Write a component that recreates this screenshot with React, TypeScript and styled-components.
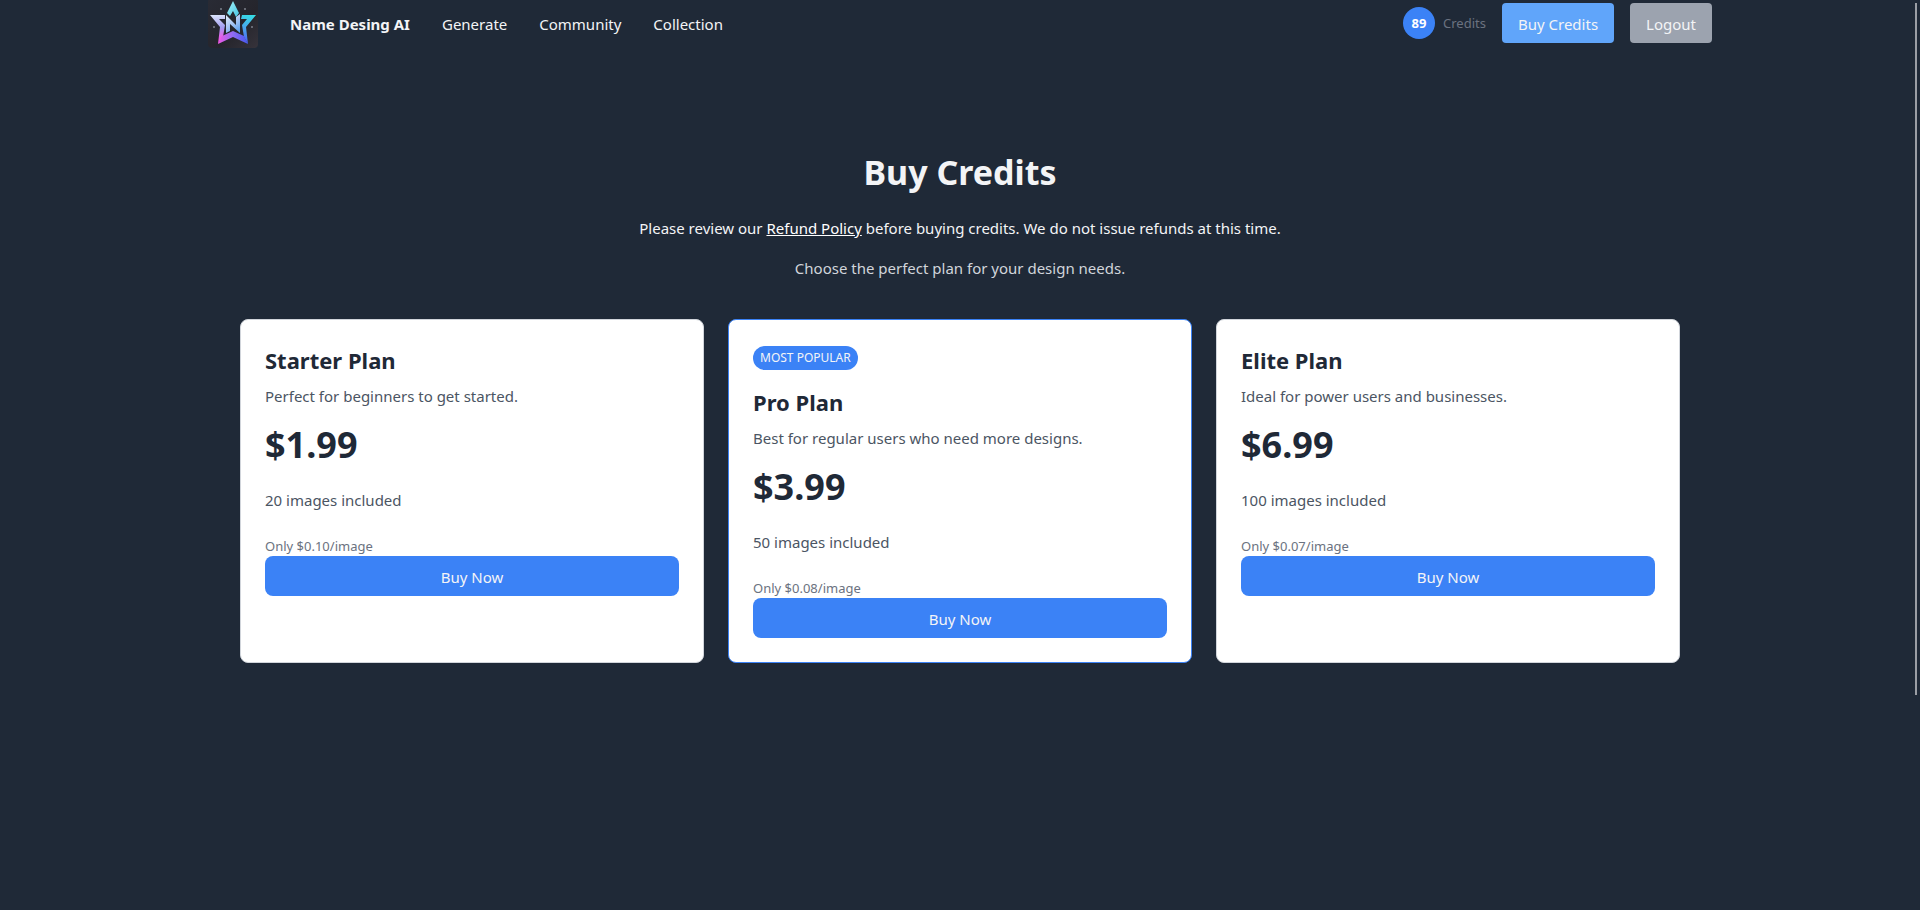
import React from "react";
import styled, { createGlobalStyle } from "styled-components";

const GlobalStyle = createGlobalStyle`
  *, *::before, *::after { box-sizing: border-box; }
  body {
    margin: 0;
    background: #1f2937;
    color: #f3f4f6;
    font-family: "Noto Sans", "Open Sans", sans-serif;
    font-size: 15px;
    line-height: 24px;
  }
  h1, h2, p { margin: 0; }
  button { font: inherit; border: 0; cursor: pointer; }
`;

const Page = styled.div`
  position: relative;
  min-height: 100vh;
`;

const ScrollThumb = styled.div`
  position: absolute;
  top: 3px;
  right: 3px;
  width: 2px;
  height: 76vh;
  background: #9b9ea5;
`;

const Header = styled.header`
  display: flex;
  align-items: center;
  justify-content: space-between;
  max-width: 1536px;
  height: 46px;
  margin: 0 auto;
  padding: 0 16px;
`;

const Nav = styled.nav`
  display: flex;
  align-items: center;
  gap: 32px;
`;

const Logo = styled.svg`
  display: block;
  flex: none;
  width: 50px;
  height: 50px;
  border-radius: 4px;
`;

const NavLink = styled.a<{ $brand?: boolean }>`
  padding-top: 2px;
  color: #f3f4f6;
  font-weight: ${(p) => (p.$brand ? 700 : 400)};
  text-decoration: none;
`;

const Account = styled.div`
  display: flex;
  align-items: center;
  gap: 16px;
`;

const Credits = styled.div`
  display: flex;
  align-items: center;
  gap: 8px;
  color: #6b7280;
  font-size: 13px;
`;

const CreditCount = styled.span`
  display: grid;
  place-items: center;
  width: 32px;
  height: 32px;
  border-radius: 50%;
  background: #3b82f6;
  color: #ffffff;
  font-weight: 700;
`;

const HeaderButton = styled.button<{ $muted?: boolean }>`
  padding: 9px 16px 7px;
  border-radius: 4px;
  background: ${(p) => (p.$muted ? "#9ca3af" : "#60a5fa")};
  color: #f3f4f6;
`;

const Main = styled.main`
  max-width: 1472px;
  margin: 0 auto;
  padding: 106px 16px 48px;
`;

const Intro = styled.div`
  display: flex;
  flex-direction: column;
  align-items: center;
  gap: 16px;
  margin-bottom: 39px;
  text-align: center;
`;

const Title = styled.h1`
  margin-bottom: 8px;
  font-size: 34px;
  line-height: 40px;
  font-weight: 700;
`;

const Policy = styled.p`
  color: #f3f4f6;
`;

const PolicyLink = styled.a`
  color: #ffffff;
  text-decoration: underline;
`;

const Tagline = styled.p`
  color: #d1d5db;
`;

const Plans = styled.div`
  display: grid;
  grid-template-columns: repeat(3, minmax(0, 1fr));
  gap: 24px;
`;

const Card = styled.section<{ $popular?: boolean }>`
  padding: 24px;
  border: 1px solid ${(p) => (p.$popular ? "#3b82f6" : "#d1d5db")};
  border-radius: 8px;
  background: #ffffff;
  color: #4b5563;
`;

const Badge = styled.span`
  display: block;
  width: fit-content;
  margin: 2px 0 16px;
  padding: 4px 7px;
  border-radius: 12px;
  background: #3b82f6;
  color: #f3f4f6;
  font-size: 12px;
  line-height: 16px;
`;

const PlanName = styled.h2`
  margin-bottom: 8px;
  color: #1f2937;
  font-size: 22px;
  line-height: 32px;
  font-weight: 700;
`;

const Price = styled.p`
  margin: 17px 0 23px;
  color: #1f2937;
  font-size: 36px;
  line-height: 40px;
  font-weight: 700;
`;

const Rate = styled.p`
  margin-top: 24px;
  color: #6b7280;
  font-size: 13px;
  line-height: 20px;
`;

const BuyButton = styled.button`
  display: block;
  width: 100%;
  padding: 9px 16px 7px;
  border-radius: 8px;
  background: #3b82f6;
  color: #f3f4f6;
`;

const plans = [
  { name: "Starter Plan", text: "Perfect for beginners to get started.", price: "$1.99", images: 20, rate: "$0.10" },
  { name: "Pro Plan", text: "Best for regular users who need more designs.", price: "$3.99", images: 50, rate: "$0.08", popular: true },
  { name: "Elite Plan", text: "Ideal for power users and businesses.", price: "$6.99", images: 100, rate: "$0.07" },
];

function StarLogo() {
  return (
    <Logo viewBox="0 0 50 50" role="img" aria-label="Star logo">
      <defs>
        <linearGradient id="tile" x1="0" y1="0" x2="1" y2="1">
          <stop offset="0" stopColor="#292b35" />
          <stop offset="0.6" stopColor="#25252c" />
          <stop offset="1" stopColor="#36333b" />
        </linearGradient>
        <linearGradient id="left" gradientUnits="userSpaceOnUse" x1="12" y1="16" x2="15" y2="46">
          <stop offset="0" stopColor="#dce6fb" />
          <stop offset="0.45" stopColor="#a39cf0" />
          <stop offset="0.8" stopColor="#ee5ae6" />
          <stop offset="1" stopColor="#f05ae6" />
        </linearGradient>
        <linearGradient id="right" gradientUnits="userSpaceOnUse" x1="42" y1="16" x2="34" y2="46">
          <stop offset="0" stopColor="#35dfe3" />
          <stop offset="0.5" stopColor="#4aa2ed" />
          <stop offset="1" stopColor="#4c57ee" />
        </linearGradient>
        <linearGradient id="base" gradientUnits="userSpaceOnUse" x1="10" y1="42" x2="40" y2="42">
          <stop offset="0" stopColor="#f057e4" />
          <stop offset="0.5" stopColor="#8e6cf2" />
          <stop offset="1" stopColor="#4658f0" />
        </linearGradient>
        <linearGradient id="middle" gradientUnits="userSpaceOnUse" x1="18" y1="17" x2="31" y2="34">
          <stop offset="0" stopColor="#e5f0fc" />
          <stop offset="0.5" stopColor="#a8c5f4" />
          <stop offset="1" stopColor="#559ff0" />
        </linearGradient>
        <linearGradient id="tip" x1="0" y1="0" x2="1" y2="1">
          <stop offset="0" stopColor="#a6f1f7" />
          <stop offset="1" stopColor="#45c6e4" />
        </linearGradient>
      </defs>
      <rect width="50" height="50" fill="url(#tile)" />
      <path d="M25 3 L31 15 L28 19 L25 13 L22 18 L19 15 Z" fill="url(#tip)" />
      <path d="M2 17 H17 V21 H11 L17 27 L15 39 L10 46 L12 29 Z" fill="url(#left)" />
      <path d="M48 17 H34 L33 21 H39 L34 27 L36 39 L40 46 L38 29 Z" fill="url(#right)" />
      <path d="M10 46 L14 38 L25 33 L36 38 L40 46 L25 39 Z" fill="url(#base)" />
      <path d="M18 35 V17 L28 27 V19 L32 16 V35 L22 26 V33 Z" fill="url(#middle)" />
      <g fill="#7d818b">
        <circle cx="13" cy="11" r="1" />
        <circle cx="37" cy="11" r="1" />
        <circle cx="6" cy="29" r="1" />
        <circle cx="44" cy="29" r="1" />
      </g>
    </Logo>
  );
}

export default function App() {
  return (
    <Page>
      <GlobalStyle />
      <Header>
        <Nav>
          <StarLogo />
          <NavLink href="#home" $brand>Name Desing AI</NavLink>
          <NavLink href="#generate">Generate</NavLink>
          <NavLink href="#community">Community</NavLink>
          <NavLink href="#collection">Collection</NavLink>
        </Nav>
        <Account>
          <Credits>
            <CreditCount>89</CreditCount>
            <span>Credits</span>
          </Credits>
          <HeaderButton type="button">Buy Credits</HeaderButton>
          <HeaderButton type="button" $muted>Logout</HeaderButton>
        </Account>
      </Header>
      <Main>
        <Intro>
          <Title>Buy Credits</Title>
          <Policy>
            Please review our <PolicyLink href="#refund-policy">Refund Policy</PolicyLink> before buying credits. We do not issue refunds at this time.
          </Policy>
          <Tagline>Choose the perfect plan for your design needs.</Tagline>
        </Intro>
        <Plans>
          {plans.map((plan) => (
            <Card key={plan.name} $popular={plan.popular}>
              {plan.popular && <Badge>MOST POPULAR</Badge>}
              <PlanName>{plan.name}</PlanName>
              <p>{plan.text}</p>
              <Price>{plan.price}</Price>
              <p>{plan.images} images included</p>
              <Rate>Only {plan.rate}/image</Rate>
              <BuyButton type="button">Buy Now</BuyButton>
            </Card>
          ))}
        </Plans>
      </Main>
      <ScrollThumb />
    </Page>
  );
}
